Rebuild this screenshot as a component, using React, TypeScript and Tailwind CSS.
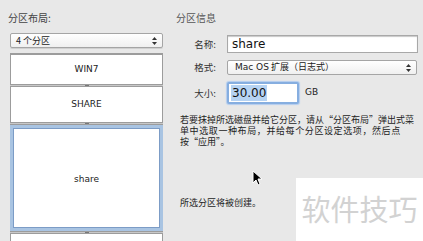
import React from "react";

const cjk = { fontFamily: '"Noto Sans CJK SC", "DejaVu Sans", sans-serif' };
const latin = { fontFamily: '"DejaVu Sans", "Noto Sans CJK SC", sans-serif' };

function Arrows() {
  return (
    <svg width="5" height="8" viewBox="0 0 5 8">
      <path d="M2.5 0 L5 3 L0 3 Z" fill="#333" />
      <path d="M2.5 8 L5 5 L0 5 Z" fill="#333" />
    </svg>
  );
}

function Divider() {
  return (
    <div className="h-[3px] bg-[#c8c8c8] border-y border-[#9c9c9c] flex justify-center items-center">
      <div className="w-[4px] h-[1px] bg-[#777]" />
    </div>
  );
}

function Box({ label, h }: { label: string; h: string }) {
  return (
    <div className={`${h} bg-white border-x border-[#9c9c9c] flex items-center justify-center text-[9px] text-[#222]`} style={latin}>
      {label}
    </div>
  );
}

export default function App() {
  return (
    <div className="w-[423px] h-[241px] bg-[#e8e8e8] flex overflow-hidden relative" style={cjk}>
      {/* left column */}
      <div className="w-[170px] flex flex-col pl-[8px] pt-[11px]">
        <div className="text-[10px] leading-[14px] text-[#444]">分区布局:</div>
        <div className="mt-[8px] ml-[2px] w-[153px] h-[15px] bg-gradient-to-b from-white to-[#f0f0f0] border border-[#a5a5a5] rounded-[2px] flex items-center justify-between px-[5px] text-[9px] text-[#222] shadow-[0_1px_0_#d0d0d0]">
          <span>4 个分区</span>
          <Arrows />
        </div>
        <div className="mt-[5px] ml-[2px] w-[153px] flex flex-col">
          <div className="h-[2px] bg-[#9c9c9c]" />
          <Box label="WIN7" h="h-[29px]" />
          <Divider />
          <Box label="SHARE" h="h-[35px]" />
          <Divider />
          <div className="h-[106px] bg-white border-[3px] border-[#a9c4e2] shadow-[inset_0_0_0_1px_#7c9cc6] flex items-center justify-center text-[9px] text-[#222] pt-[3px]" style={latin}>
            share
          </div>
          <Divider />
          <div className="h-[10px] bg-white border-x border-[#9c9c9c]" />
        </div>
      </div>

      {/* right column */}
      <div className="flex-1 flex flex-col pl-[6px] pt-[11px]">
        <div className="text-[10px] leading-[14px] text-[#555]">分区信息</div>
        <div className="mt-[10px] flex items-center h-[18px]">
          <div className="w-[40px] text-right text-[9.5px] text-[#333]">名称:</div>
          <div className="ml-[11px] w-[191px] h-[18px] bg-white border border-[#a8a8a8] shadow-[inset_0_1px_1px_#c8c8c8] flex items-center px-[4px] text-[12px] text-[#111]" style={latin}>
            share
          </div>
        </div>
        <div className="mt-[7px] flex items-center h-[15px]">
          <div className="w-[40px] text-right text-[9.5px] text-[#333]">格式:</div>
          <div className="ml-[11px] w-[190px] h-[15px] bg-gradient-to-b from-white to-[#f0f0f0] border border-[#a5a5a5] rounded-[2px] flex items-center justify-between pl-[7px] pr-[5px] text-[9px] text-[#222]">
            <span>
              <span style={latin}>Mac OS</span> 扩展（日志式）
            </span>
            <Arrows />
          </div>
        </div>
        <div className="mt-[7px] flex items-center h-[22px]">
          <div className="w-[40px] text-right text-[9.5px] text-[#333]">大小:</div>
          <div className="ml-[11px] w-[72px] h-[22px] bg-white border-[2px] border-[#86aee0] rounded-[2px] shadow-[0_0_1px_1px_#b3cdef] flex items-center px-[2px]">
            <span className="bg-[#b6d3f3] text-[12px] leading-[16px] text-[#111] px-[1px]" style={latin}>30.00</span>
          </div>
          <div className="ml-[6px] text-[9px] text-[#222]" style={latin}>GB</div>
        </div>
        <div className="mt-[10px] pl-[4px] text-[9px] leading-[11px] text-[#222] whitespace-nowrap">
          <div>若要抹掉所选磁盘并给它分区，请从“分区布局”弹出式菜</div>
          <div className="tracking-[0.6px]">单中选取一种布局，并给每个分区设定选项，然后点</div>
          <div>按“应用”。</div>
        </div>
        <div className="mt-[50px] pl-[4px] text-[9px] leading-[11px] text-[#222]">所选分区将被创建。</div>
      </div>

      {/* cursor */}
      <svg className="absolute left-[252px] top-[170px]" width="11" height="16" viewBox="0 0 11 16">
        <path d="M1 1 L1 13 L4 10 L6 15 L8 14 L6 9 L10 9 Z" fill="#000" stroke="#fff" strokeWidth="1" />
      </svg>

      {/* watermark */}
      <div className="absolute left-[296px] top-[178px] w-[127px] h-[63px] bg-white flex items-start justify-center pt-[12px]">
        <span className="text-[29px] leading-[36px] text-[#d2d2d2]" style={cjk}>软件技巧</span>
      </div>
    </div>
  );
}
